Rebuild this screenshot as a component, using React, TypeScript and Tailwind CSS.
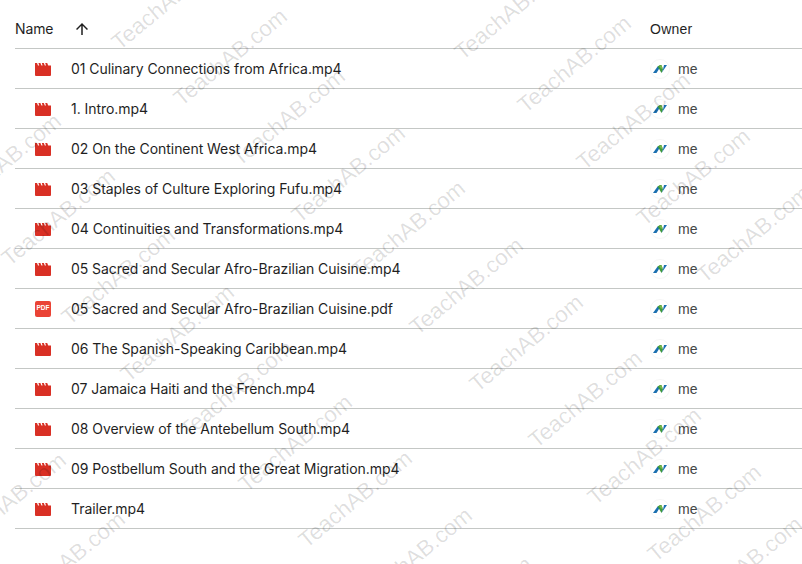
const files = [
  { name: "01 Culinary Connections from Africa.mp4", type: "video" },
  { name: "1. Intro.mp4", type: "video" },
  { name: "02 On the Continent West Africa.mp4", type: "video" },
  { name: "03 Staples of Culture Exploring Fufu.mp4", type: "video" },
  { name: "04 Continuities and Transformations.mp4", type: "video" },
  { name: "05 Sacred and Secular Afro-Brazilian Cuisine.mp4", type: "video" },
  { name: "05 Sacred and Secular Afro-Brazilian Cuisine.pdf", type: "pdf" },
  { name: "06 The Spanish-Speaking Caribbean.mp4", type: "video" },
  { name: "07 Jamaica Haiti and the French.mp4", type: "video" },
  { name: "08 Overview of the Antebellum South.mp4", type: "video" },
  { name: "09 Postbellum South and the Great Migration.mp4", type: "video" },
  { name: "Trailer.mp4", type: "video" },
];

// start point of each watermark, one diagonal run per list
const marks: [number, number][] = [
  [-46, 547], [13, 606],
  [-51, 208], [3, 263], [63, 322], [122, 379], [181, 435], [240, 489], [300, 545], [360, 602], [420, 651],
  [113, 47], [175, 103], [233, 163], [293, 220], [353, 275], [411, 332], [471, 389], [530, 445], [589, 502], [649, 559], [690, 611],
  [456, 57], [519, 110], [578, 167], [638, 223], [698, 280],
];

function VideoIcon() {
  return (
    <svg width="16" height="14" viewBox="0 0 16 14" className="shrink-0">
      <path
        d="M0 1h2l1 2.600h1.200L3.400 1h2l1 2.600h1.200L6.800 1h2l1 2.600H11L10.200 1h2l1 2.600H16V13a1 1 0 0 1-1 1H1a1 1 0 0 1-1-1z"
        fill="#d93025"
      />
    </svg>
  );
}

function PdfIcon() {
  return (
    <div className="w-4 h-4 shrink-0 rounded-[2px] bg-[#ea4335] flex items-center justify-center">
      <span className="text-[6.5px] leading-none font-bold text-white font-['Liberation_Sans',sans-serif]">PDF</span>
    </div>
  );
}

function OwnerLogo() {
  return (
    <div className="w-5 h-5 shrink-0 rounded-full border border-[#f6f6f6] flex items-center justify-center">
      <svg width="14" height="10" viewBox="0 0 14 10">
        <path d="M0 9 4.600 2.500H7.500L3.500 9z" fill="#1a6fb0" />
        <path d="M4.600 2.500 7 1h1.500L10 5.500 8.500 9z" fill="#3f9a3a" />
        <path d="M8.500 9 10 5.500 11 1h3z" fill="#1a6fb0" />
        <path d="M6 1.500h2.500L9.500 4 8 5z" fill="#7ab648" />
      </svg>
    </div>
  );
}

export default function App() {
  return (
    <div className="relative w-[802px] h-[564px] overflow-hidden bg-white font-['Roboto',sans-serif] text-sm text-[#1f1f1f]">
      <div className="pl-[15px]">
        <div className="h-[49px] pt-[10px] flex items-center border-b border-[#c4c7c5]">
          <div className="w-[635px] flex items-center">
            <span className="w-[58px] font-['Inter',sans-serif] tracking-[-0.1px]">Name</span>
            <svg width="18" height="18" viewBox="0 0 24 24" fill="#1f1f1f">
              <path d="M4 12l1.41 1.41L11 7.83V20h2V7.83l5.58 5.59L20 12l-8-8-8 8z" />
            </svg>
          </div>
          <span className="font-['Liberation_Sans',sans-serif] tracking-[0.25px]">Owner</span>
        </div>
        {files.map((f) => (
          <div key={f.name} className="h-10 flex items-center border-b border-[#c4c7c5]">
            <div className="w-[635px] pl-5 flex items-center gap-5">
              <div className="w-4 flex justify-center">{f.type === "pdf" ? <PdfIcon /> : <VideoIcon />}</div>
              <span className="font-['Inter',sans-serif] tracking-[-0.06px]">{f.name}</span>
            </div>
            <div className="flex items-center gap-2">
              <OwnerLogo />
              <span className="font-['Liberation_Sans',sans-serif] text-[#444746]">me</span>
            </div>
          </div>
        ))}
      </div>
      {/* watermark sits over everything */}
      <div className="absolute inset-0 pointer-events-none">
        {marks.map(([x, y]) => (
          <span
            key={x + "-" + y}
            className="absolute whitespace-nowrap origin-bottom-left rotate-[-39.4deg] font-['Liberation_Sans',sans-serif] text-[22.5px] leading-[23px] text-black/[0.13]"
            style={{ left: x + 9, top: y - 23 + 7 }}
          >
            TeachAB.com
          </span>
        ))}
      </div>
    </div>
  );
}
